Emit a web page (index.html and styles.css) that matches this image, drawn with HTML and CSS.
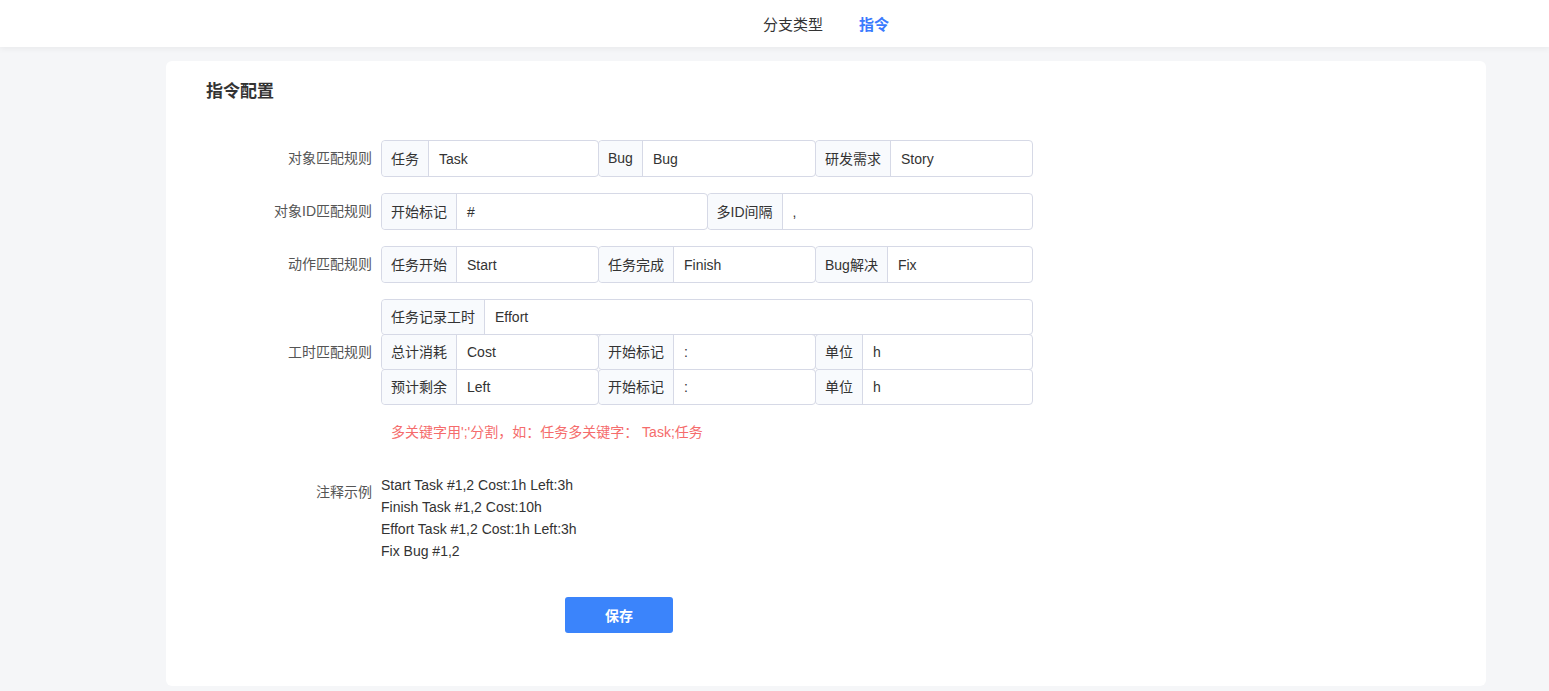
FILE: index.html
```html
<!DOCTYPE html>
<html>
<head>
  <meta charset="UTF-8">
  <title>指令配置</title>
  <link rel="stylesheet" href="styles.css">
</head>
<body>
  <div class="header">
    <div class="nav">
      <span class="nav-item">分支类型</span>
      <span class="nav-item active">指令</span>
    </div>
  </div>

  <div class="card">
    <h3 class="title">指令配置</h3>

    <div class="form-row">
      <div class="form-label">对象匹配规则</div>
      <div class="form-body">
        <div class="line">
          <div class="group"><span class="addon">任务</span><span class="val">Task</span></div>
          <div class="group"><span class="addon">Bug</span><span class="val">Bug</span></div>
          <div class="group"><span class="addon">研发需求</span><span class="val">Story</span></div>
        </div>
      </div>
    </div>

    <div class="form-row">
      <div class="form-label">对象ID匹配规则</div>
      <div class="form-body">
        <div class="line">
          <div class="group"><span class="addon">开始标记</span><span class="val">#</span></div>
          <div class="group"><span class="addon">多ID间隔</span><span class="val">,</span></div>
        </div>
      </div>
    </div>

    <div class="form-row">
      <div class="form-label">动作匹配规则</div>
      <div class="form-body">
        <div class="line">
          <div class="group"><span class="addon">任务开始</span><span class="val">Start</span></div>
          <div class="group"><span class="addon">任务完成</span><span class="val">Finish</span></div>
          <div class="group"><span class="addon">Bug解决</span><span class="val">Fix</span></div>
        </div>
      </div>
    </div>

    <div class="form-row">
      <div class="form-label tall">工时匹配规则</div>
      <div class="form-body stack">
        <div class="line small">
          <div class="group"><span class="addon">任务记录工时</span><span class="val">Effort</span></div>
        </div>
        <div class="line small">
          <div class="group"><span class="addon">总计消耗</span><span class="val">Cost</span></div>
          <div class="group"><span class="addon">开始标记</span><span class="val">:</span></div>
          <div class="group"><span class="addon">单位</span><span class="val">h</span></div>
        </div>
        <div class="line small">
          <div class="group"><span class="addon">预计剩余</span><span class="val">Left</span></div>
          <div class="group"><span class="addon">开始标记</span><span class="val">:</span></div>
          <div class="group"><span class="addon">单位</span><span class="val">h</span></div>
        </div>
        <div class="hint">多关键字用';'分割，如：任务多关键字： Task;任务</div>
      </div>
    </div>

    <div class="form-row example-row">
      <div class="form-label">注释示例</div>
      <div class="form-body example">
        <div>Start Task #1,2 Cost:1h Left:3h</div>
        <div>Finish Task #1,2 Cost:10h</div>
        <div>Effort Task #1,2 Cost:1h Left:3h</div>
        <div>Fix Bug #1,2</div>
      </div>
    </div>

    <div class="actions">
      <button class="btn-primary">保存</button>
    </div>
  </div>
</body>
</html>
```

FILE: styles.css
```css
body {
  margin: 0;
  background-color: #f5f6f8;
  font-family: "Liberation Sans", "Noto Sans CJK SC", sans-serif;
  font-size: 14px;
  color: #333;
}
.header {
  height: 47px;
  background: #fff;
  box-shadow: 0 2px 6px rgba(0, 0, 0, 0.05);
}
.nav {
  display: flex;
  align-items: center;
  height: 47px;
  padding-left: 763px;
  gap: 36px;
}
.nav-item {
  font-size: 15px;
  color: #333;
}
.nav-item.active {
  color: #3a7afe;
  font-weight: bold;
}
.card {
  width: 1320px;
  margin: 14px 0 5px 166px;
  background: #fff;
  border-radius: 6px;
  padding: 19px 0 53px 40px;
  box-sizing: border-box;
}
.title {
  margin: 0 0 36px;
  font-size: 17px;
  line-height: 24px;
  font-weight: bold;
  color: #333;
}
.form-row {
  display: flex;
  margin-bottom: 16px;
}
.form-label {
  width: 175px;
  padding-right: 9px;
  box-sizing: border-box;
  text-align: right;
  color: #555;
  line-height: 37px;
}
.form-label.tall {
  line-height: 106px;
}
.form-body {
  width: 652px;
}
.line {
  display: flex;
  height: 37px;
}
.line.small {
  height: 36px;
}
.line.small + .line.small {
  margin-top: -1px;
}
.group {
  flex: 1;
  display: flex;
  border: 1px solid #d6d9e6;
  border-radius: 4px;
  box-sizing: border-box;
  min-width: 0;
}
.group + .group {
  margin-left: -1px;
}
.addon {
  display: flex;
  align-items: center;
  padding: 0 9px 2px;
  background: #f8fafd;
  border-right: 1px solid #d6d9e6;
  border-radius: 4px 0 0 4px;
  color: #333;
  white-space: nowrap;
}
.val {
  flex: 1;
  display: flex;
  align-items: center;
  padding: 0 10px;
  color: #333;
}
.hint {
  margin-top: 17px;
  padding-left: 10px;
  color: #f56c6c;
  line-height: 20px;
}
.example-row {
  margin-top: 32px;
}
.example-row .form-label {
  line-height: 20px;
  padding-top: 8px;
}
.example {
  line-height: 22px;
}
.actions {
  padding-left: 359px;
  margin-top: 35px;
}
.btn-primary {
  width: 108px;
  height: 36px;
  border: none;
  border-radius: 3px;
  background-color: #3b84fb;
  color: #fff;
  font-family: inherit;
  font-size: 14px;
  font-weight: bold;
  cursor: pointer;
}
```
